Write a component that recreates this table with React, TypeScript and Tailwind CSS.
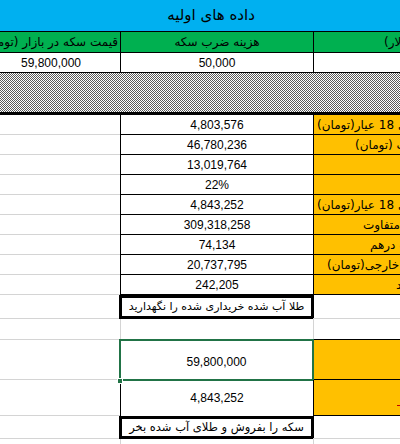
const FONT = "font-['Liberation_Sans','DejaVu_Sans',sans-serif]";
const FA = "font-['DejaVu_Sans',sans-serif]";

type TRow = {
  value: string;
  label?: string;
  indent?: string;
};

const rows: TRow[] = [
  { value: '4,803,576', label: 'قیمت هر گرم طلای 18 عیار(تومان)', indent: 'pl-[3px]' },
  { value: '46,780,236', label: 'ارزش هر گرم طلای آب (تومان)', indent: 'pl-[41px]' },
  { value: '13,019,764' },
  { value: '22%' },
  { value: '4,843,252', label: 'قیمت طلای 18 عیار(تومان)', indent: 'pl-[3px]' },
  { value: '309,318,258', label: 'متفاوت', indent: 'pl-[49px]' },
  { value: '74,134', label: 'قیمت درهم', indent: 'pl-[56px]' },
  { value: '20,737,795', label: 'قیمت طلای خارجی(تومان)', indent: 'pl-[13px]' },
  { value: '242,205', label: 'سود', indent: 'pl-[82px]' },
];

const Label = ({ text, indent }: { text?: string; indent?: string }) => (
  <div
    className={`flex items-center overflow-hidden border-b border-l border-black bg-[#FFC000] ${indent ?? ''}`}
  >
    {text ? (
      <span dir="rtl" className={`w-max shrink-0 whitespace-nowrap text-[12px] ${FA}`}>
        {text}
      </span>
    ) : null}
  </div>
);

const DataRow = ({ value, label, indent }: TRow) => (
  <div className="grid h-[20px] grid-cols-[120px_193px_87px]">
    <div className="border-b border-[#d4d4d4]" />
    <div className="flex items-center justify-center border-b border-l border-black">
      {value}
    </div>
    <Label text={label} indent={indent} />
  </div>
);

const BoxRow = ({ text, h, size }: { text: string; h: string; size: string }) => (
  <div className={`grid grid-cols-[120px_193px_87px] ${h}`}>
    <div className="border-b border-[#d4d4d4]" />
    <div
      dir="rtl"
      className={`-mx-px flex items-center justify-center overflow-hidden whitespace-nowrap border-[3px] border-black ${size} ${FA}`}
    >
      {text}
    </div>
    <div className="border-b border-[#d4d4d4]" />
  </div>
);

export default function App() {
  return (
    <div className={`h-[444px] w-[400px] overflow-hidden bg-white text-[12px] text-black ${FONT}`}>
      {/* Title */}
      <div
        dir="rtl"
        className={`flex h-[32px] items-center justify-center border-b border-black bg-[#00B0F0] pl-[22px] text-[15px] ${FA}`}
      >
        داده های اولیه
      </div>

      {/* Header */}
      <div className={`grid h-[21px] grid-cols-[120px_193px_87px] border-b border-black bg-[#00B050] ${FA}`}>
        <div className="flex items-center justify-end overflow-hidden pr-[2px]">
          <span dir="rtl" className="shrink-0 whitespace-nowrap">
            قیمت سکه در بازار (تومان)
          </span>
        </div>
        <div dir="rtl" className="flex items-center justify-center border-l border-black">
          هزینه ضرب سکه
        </div>
        <div className="flex items-center overflow-hidden border-l border-black pl-[70px]">
          <span dir="rtl" className="w-max shrink-0 whitespace-nowrap">
            قیمت طلای خارجی (دلار)
          </span>
        </div>
      </div>

      {/* Input values */}
      <div className="grid h-[20px] grid-cols-[120px_193px_87px] border-b border-black">
        <div className="flex items-center justify-center pr-[18px]">59,800,000</div>
        <div className="flex items-center justify-center border-l border-black">50,000</div>
        <div className="border-l border-black" />
      </div>

      {/* Hatched separator */}
      <div className="h-[42px] border-b-[3px] border-black bg-[image:repeating-conic-gradient(#5a5a5a_0%_25%,#fff_0%_50%)] bg-[length:2px_2px]" />

      {/* Calculations */}
      {rows.map((r) => (
        <DataRow key={r.value} {...r} />
      ))}

      <BoxRow text="طلا آب شده خریداری شده را نگهدارید" h="h-[24px]" size="text-[11px]" />

      {/* Empty row */}
      <div className="grid h-[21px] grid-cols-[120px_193px_87px]">
        <div className="border-b border-[#d4d4d4]" />
        <div className="border-b border-l border-[#d4d4d4]" />
        <div className="border-b border-l border-[#d4d4d4] border-b-black" />
      </div>

      {/* Selected result */}
      <div className="grid h-[40px] grid-cols-[120px_193px_87px]">
        <div className="border-b border-[#d4d4d4]" />
        <div className="relative flex items-center justify-center pt-[3px]">
          59,800,000
          <div className="absolute -inset-x-px -top-px bottom-[-1px] border-2 border-[#217346]" />
          <div className="absolute bottom-[-4px] left-[-3px] size-[6px] border border-white bg-[#217346]" />
        </div>
        <Label />
      </div>

      <div className="grid h-[36px] grid-cols-[120px_193px_87px]">
        <div className="border-b border-[#d4d4d4]" />
        <div className="flex items-center justify-center border-l border-black">4,843,252</div>
        <div className="relative overflow-hidden border-b border-l border-black bg-[#FFC000]">
          <span className="absolute bottom-[9px] left-[83px] h-px w-[4px] bg-[#c00000]" />
        </div>
      </div>

      <BoxRow text="سکه را بفروش و طلای آب شده بخر" h="h-[23px]" size="text-[11.5px]" />

      <div className="grid h-[20px] grid-cols-[120px_193px_87px]">
        <div className="border-b border-[#d4d4d4]" />
        <div className="border-b border-l border-[#d4d4d4]" />
        <div className="border-b border-l border-[#d4d4d4]" />
      </div>
    </div>
  );
}
